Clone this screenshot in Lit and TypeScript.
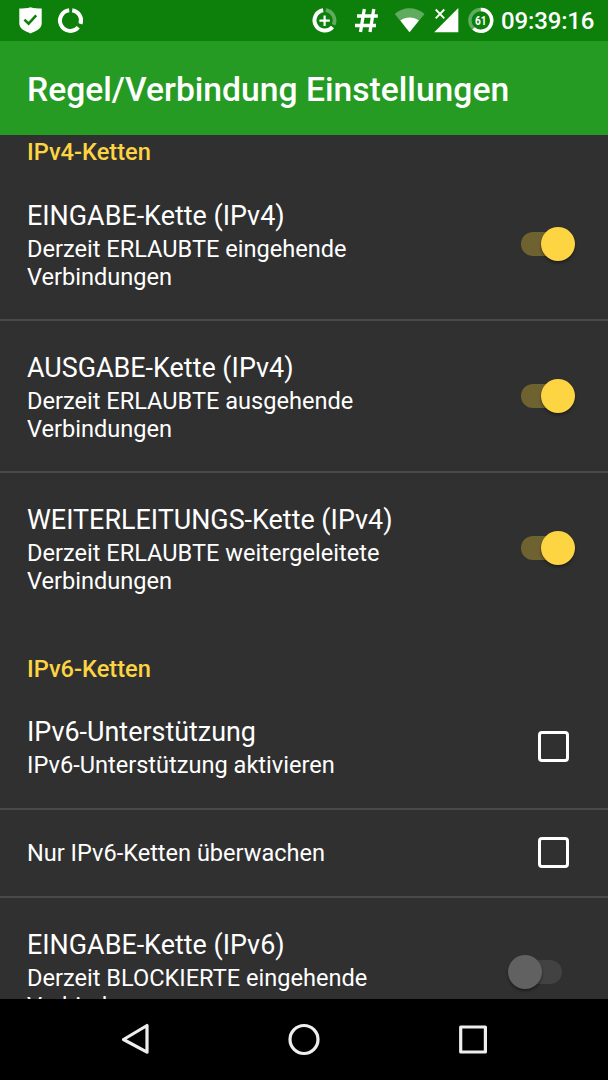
import { LitElement, html, css, nothing } from "lit";
import { customElement, property } from "lit/decorators.js";

type Control = "on" | "off" | "box";

@customElement("status-bar")
class StatusBar extends LitElement {
  static styles = css`
    :host { display: block; height: 41px; background: #0c800a; }
    svg { display: block; }
    .clock { font: 500 24px Roboto, sans-serif; fill: #fff; }
    .level { font: 700 13px Roboto, sans-serif; fill: #fff; }
  `;
  render() {
    return html`<svg width="608" height="41" viewBox="0 0 608 41" fill="none">
      <path d="M30.500 7.200C27 8.300 23 8.600 19.300 8.600V23.500C19.300 28.800 25.500 31.400 30.500 33.400C35.500 31.400 41.700 28.800 41.700 23.500V8.600C38 8.600 34 8.300 30.500 7.200Z" fill="#fff"/>
      <path d="M24.400 19.600L28.600 23.600L36.200 15.300" stroke="#0c800a" stroke-width="2.600"/>
      <path d="M72.200 10.200A10.400 10.400 0 0 1 80.500 23.800M78.300 27.300A10.400 10.400 0 1 1 69.200 10.200" stroke="#fff" stroke-width="4"/>
      <path d="M325.800 10.200A10.400 10.400 0 0 1 333.600 24.800" stroke="#fff" stroke-opacity=".35" stroke-width="3.800"/>
      <path d="M323.200 10.300A10.200 10.200 0 1 0 332.500 27" stroke="#fff" stroke-width="4"/>
      <path d="M324.600 15.500V25.900M319.400 20.700H329.800" stroke="#fff" stroke-width="2.200"/>
      <path d="M364.300 9L360.500 32M373.800 9L370 32M357 16H377.800M355 25.500H376" stroke="#fff" stroke-width="3.300"/>
      <path d="M409.500 32.300L394.800 13.900C403 6.300 416 6.300 424.500 13.900Z" fill="#fff" fill-opacity=".35"/>
      <path d="M409.500 32.300L400.300 20.600C405.500 16.500 413.700 16.500 418.900 20.600Z" fill="#fff"/>
      <path d="M458.300 8V32.200H434.200Z" fill="#fff"/>
      <path d="M435.700 9.500L444.300 18.300M444.300 9.500L435.700 18.300" stroke="#fff" stroke-width="1.800"/>
      <circle cx="480.800" cy="20.400" r="10.900" stroke="#fff" stroke-opacity=".35" stroke-width="3.400"/>
      <path d="M480.800 9.500A10.900 10.900 0 1 1 473.500 28.500" stroke="#fff" stroke-width="3.400"/>
      <text class="level" x="480.800" y="25.400" text-anchor="middle" textLength="11.500" lengthAdjust="spacingAndGlyphs">61</text>
      <text class="clock" x="501" y="29" textLength="93.500">09:39:16</text>
    </svg>`;
  }
}

@customElement("pref-row")
class PrefRow extends LitElement {
  @property() heading = "";
  @property() summary = "";
  @property() control: Control = "on";

  static styles = css`
    :host { display: flex; box-sizing: border-box; flex: none; align-items: center; justify-content: space-between; padding: 0 27px; color: #fff; border-bottom: 2px solid transparent; }
    .heading { font-size: 26.900px; line-height: 32px; padding: 4px 0; }
    .summary { font-size: 23.580px; line-height: 27.700px; width: 440px; }
    .single { font-size: 23.550px; line-height: 28px; }
    .track { width: 41px; height: 24px; margin-right: 19px; border-radius: 12px; background: #6e6231; display: flex; align-items: center; }
    .thumb { flex: none; width: 34px; height: 34px; border-radius: 50%; background: #fdd442; margin-left: 20px; box-shadow: 0 2px 3px rgba(0, 0, 0, .4); }
    .off { background: #424242; margin-bottom: 1px; }
    .off .thumb { margin-left: -13px; background: #616161; }
    .box { box-sizing: border-box; width: 31px; height: 31px; border: 3.500px solid #fff; border-radius: 4px; margin-right: 12px; }
    :host(.short) .box { margin-bottom: 2px; }
  `;
  render() {
    return html`
      <div>
        <div class=${this.summary ? "heading" : "single"}>${this.heading}</div>
        ${this.summary ? html`<div class="summary">${this.summary}</div>` : nothing}
      </div>
      ${this.control === "box"
        ? html`<div class="box"></div>`
        : html`<div class="track ${this.control}"><div class="thumb"></div></div>`}
    `;
  }
}

@customElement("app-root")
class AppRoot extends LitElement {
  static styles = css`
    :host { display: flex; flex-direction: column; height: 1080px; width: 608px; overflow: hidden; background: #303030; font-family: Roboto, sans-serif; }
    status-bar { flex: none; }
    .title { flex: none; box-sizing: border-box; height: 94px; padding: 0 27px; margin: 0; background: #259b24; color: #fff; font-size: 33.650px; font-weight: 500; line-height: 98px; white-space: nowrap; }
    .list { flex: 1; min-height: 0; overflow: hidden; display: flex; flex-direction: column; }
    .category { flex: none; box-sizing: border-box; color: #fdd442; font-size: 23.600px; font-weight: 500; line-height: 34px; height: 34px; padding: 0 27px; }
    .spaced { height: 59px; padding-top: 27px; }
    .tall { height: 152px; }
    .medium { height: 126px; }
    .short { height: 88px; }
    .last { height: 151px; }
    .ruled { border-bottom-color: #494949; }
    .nav { flex: none; height: 81px; background: #000; }
    .nav svg { display: block; }
  `;
  render() {
    return html`
      <status-bar></status-bar>
      <h1 class="title">Regel/Verbindung Einstellungen</h1>
      <div class="list">
        <div class="category">IPv4-Ketten</div>
        <pref-row class="tall ruled" heading="EINGABE-Kette (IPv4)" summary="Derzeit ERLAUBTE eingehende Verbindungen"></pref-row>
        <pref-row class="tall ruled" heading="AUSGABE-Kette (IPv4)" summary="Derzeit ERLAUBTE ausgehende Verbindungen"></pref-row>
        <pref-row class="tall" heading="WEITERLEITUNGS-Kette (IPv4)" summary="Derzeit ERLAUBTE weitergeleitete Verbindungen"></pref-row>
        <div class="category spaced">IPv6-Ketten</div>
        <pref-row class="medium ruled" control="box" heading="IPv6-Unterstützung" summary="IPv6-Unterstützung aktivieren"></pref-row>
        <pref-row class="short ruled" control="box" heading="Nur IPv6-Ketten überwachen"></pref-row>
        <pref-row class="last" control="off" heading="EINGABE-Kette (IPv6)" summary="Derzeit BLOCKIERTE eingehende Verbindungen"></pref-row>
      </div>
      <div class="nav">
        <svg width="608" height="81" viewBox="0 0 608 81" fill="none" stroke="#eee" stroke-width="3.200" stroke-linejoin="round">
          <path d="M147 26.500V53.200L123.500 40.500Z"/>
          <circle cx="304" cy="40.500" r="14"/>
          <rect x="460.700" y="28" width="24.700" height="25"/>
        </svg>
      </div>
    `;
  }
}
